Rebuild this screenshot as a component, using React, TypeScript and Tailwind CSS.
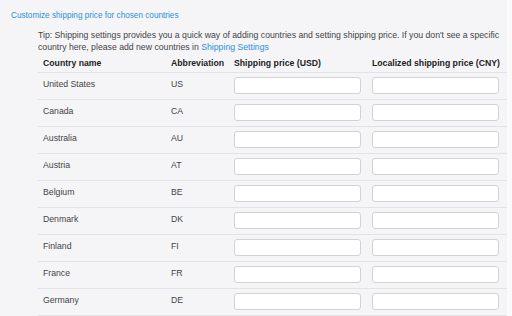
const countries = [
  { name: 'United States', code: 'US' },
  { name: 'Canada', code: 'CA' },
  { name: 'Australia', code: 'AU' },
  { name: 'Austria', code: 'AT' },
  { name: 'Belgium', code: 'BE' },
  { name: 'Denmark', code: 'DK' },
  { name: 'Finland', code: 'FI' },
  { name: 'France', code: 'FR' },
  { name: 'Germany', code: 'DE' },
];

export default function App() {
  return (
    <div className="h-[316px] w-[512px] overflow-hidden bg-[#fafafb] font-['Liberation_Sans',Arial,sans-serif]">
      <div className="h-full w-[507px] bg-[#f5f5f7]">
        <div className="px-[11px] pt-[10px] text-[8.2px] leading-[11px] text-[#2d8fd5]">
          Customize shipping price for chosen countries
        </div>
        <div className="pl-[38px] pt-[8px]">
          <p className="text-[8.7px] leading-[12px] text-[#444]">
            Tip: Shipping settings provides you a quick way of adding countries and setting shipping price. If you don't see a specific
            country here, please add new countries in <span className="text-[#2d8fd5]">Shipping Settings</span>
          </p>
          <table className="w-[469px] border-collapse text-[8.7px] text-[#444]">
            <thead>
              <tr className="h-[19px] border-b border-[#e3e3e6]">
                <th className="w-[128px] pl-[5px] pt-[3px] text-left font-bold text-[#222]">Country name</th>
                <th className="w-[63px] pl-[5px] pt-[3px] text-left font-bold text-[#222]">Abbreviation</th>
                <th className="w-[138px] pl-[5px] pt-[3px] text-left font-bold text-[#222]">Shipping price (USD)</th>
                <th className="pl-[5px] pt-[3px] text-left font-bold text-[#222]">Localized shipping price (CNY)</th>
              </tr>
            </thead>
            <tbody>
              {countries.map((c) => (
                <tr key={c.code} className="h-[27px] border-b border-[#e3e3e6]">
                  <td className="pl-[5px] align-top pt-[5px]">{c.name}</td>
                  <td className="pl-[5px] align-top pt-[5px]">{c.code}</td>
                  <td className="pl-[5px] align-middle">
                    <input className="block h-[17px] w-[127px] rounded-[3px] border border-[#d2d2d4] bg-white" />
                  </td>
                  <td className="pl-[5px] align-middle">
                    <input className="block h-[17px] w-[127px] rounded-[3px] border border-[#d2d2d4] bg-white" />
                  </td>
                </tr>
              ))}
            </tbody>
          </table>
        </div>
      </div>
    </div>
  );
}
